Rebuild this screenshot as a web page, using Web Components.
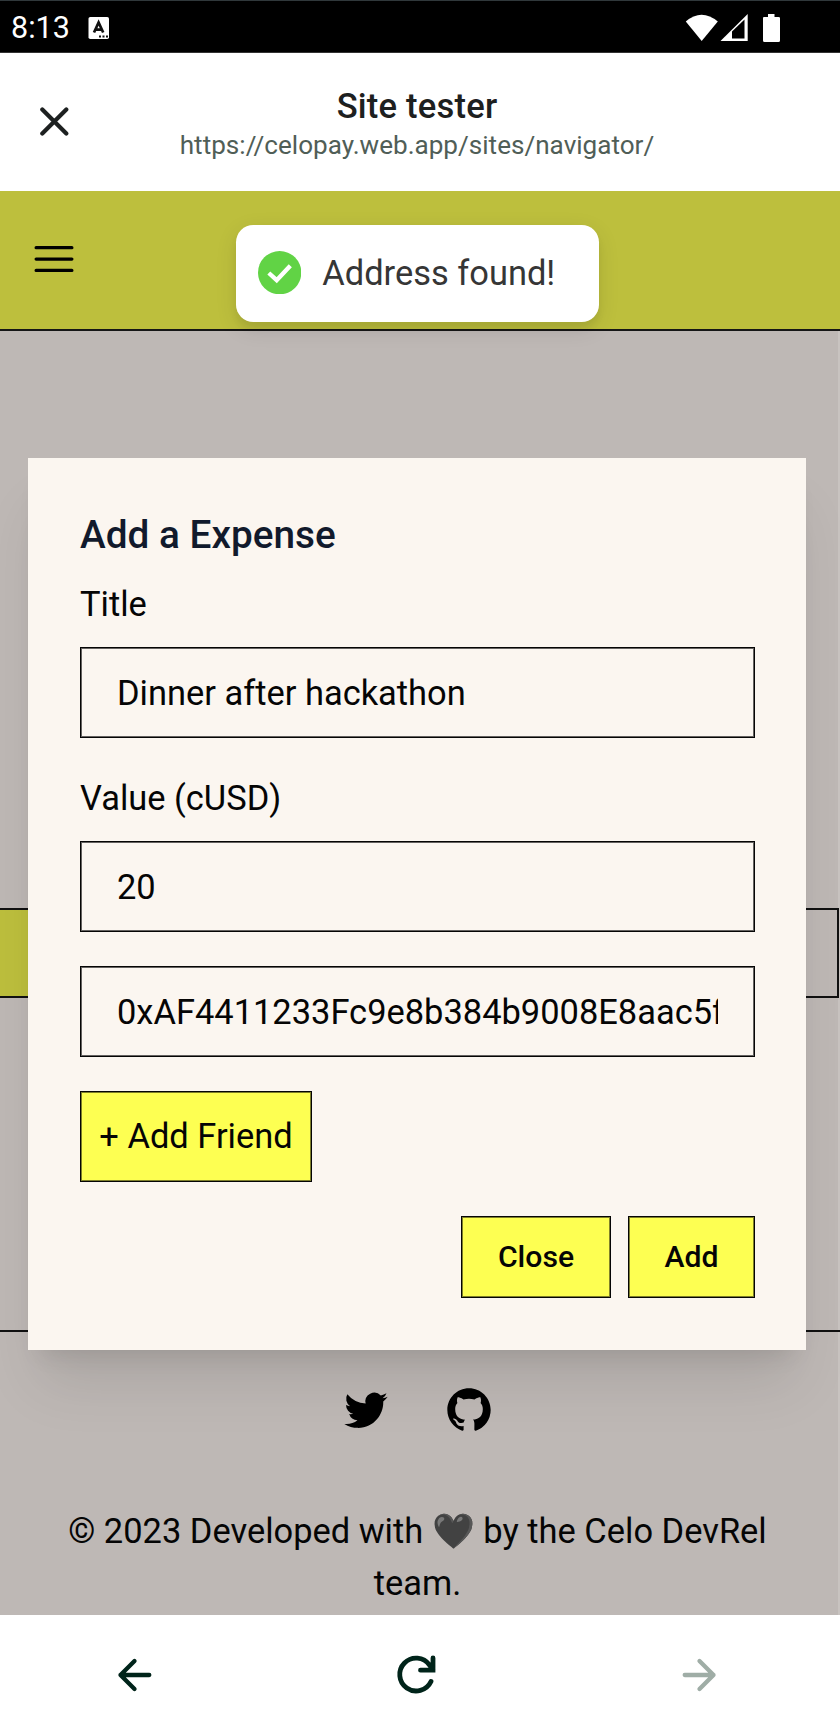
<!DOCTYPE html>
<html lang="en">
<head>
<meta charset="utf-8">
<title>Site tester</title>
<style>
html,body{margin:0;padding:0}
body{width:840px;height:1733px;overflow:hidden;background:#fff;font-family:Roboto,"Noto Sans",sans-serif;color:#050505}
</style>
</head>
<body>
<phone-screen></phone-screen>
<script>
const define = (name, css, html) => {
  const t = document.createElement('template');
  t.innerHTML = `<style>*{box-sizing:border-box}svg{display:block;flex:none}${css}</style>${html}`;
  customElements.define(name, class extends HTMLElement {
    constructor() {
      super();
      this.attachShadow({mode: 'open'}).append(t.content.cloneNode(true));
    }
  });
};

define('status-bar', `
:host{display:flex;align-items:center;height:53px;box-sizing:border-box;background:#000;color:#fff;border-top:1px solid #30383b;border-bottom:1px solid #333;padding:2px 60px 0 11px}
.time{font-size:30.500px;line-height:50px}
.right{margin-left:auto}
`, `<span class="time">8:13</span>
<svg style="margin-left:18px" width="22" height="24" viewBox="0 0 22 24"><rect x=".5" y="1" width="20.5" height="22" rx="1.8" fill="#fff"/><path d="M6 16.500L10.600 6.500L15.200 16.500M7.600 13.600H13.600" fill="none" stroke="#111" stroke-width="2.700"/><path d="M11 20.500h2M14.500 20.500h2M18 20.500h2" stroke="#111" stroke-width="2"/></svg>
<svg class="right" width="96" height="30" viewBox="0 0 96 30"><path d="M1.800 8.500Q17.500-5 33.800 8.500L17.700 28Z" fill="#fff"/><path d="M36.500 28L63.700 1V28Z" fill="#fff"/><path d="M48 18.500L60.500 6.500V25.500H48Z" fill="#000"/><path d="M84 1h6.500v3H94.500q1.500 0 1.500 1V27.500q0 1.500-1.500 1.500H80.500Q79 29 79 27.500V5q0-1 1-1h4Z" fill="#fff"/></svg>`);

define('browser-bar', `
:host{display:grid;grid-template-columns:108px 1fr 114px;align-items:center;height:138px;background:#fff;color:#1d2020}
.mid{display:flex;flex-direction:column;align-items:center;padding-top:3px}
.t{font-size:34.600px;letter-spacing:.2px;font-weight:500;line-height:42px;white-space:nowrap}
.u{font-size:26.100px;line-height:36px;color:#505e57;white-space:nowrap}
svg{margin-left:39px}
`, `<svg width="30" height="30" viewBox="0 0 30 30"><path d="M3.300 2.600L27.300 26.600M27.300 2.600L3.300 26.600" fill="none" stroke="#1d2020" stroke-width="4.200" stroke-linecap="round"/></svg>
<div class="mid"><div class="t"><slot name="title"></slot></div><div class="u"><slot name="url"></slot></div></div>`);

define('site-header', `
:host{display:flex;align-items:center;box-sizing:border-box;height:140px;background:#bdbf3d;border-bottom:2px solid #161616;padding:0 0 2px 28.400px}
`, `<svg width="52" height="52" viewBox="0 0 24 24"><path d="M3.750 6.750h16.500M3.750 12h16.500M3.750 17.250h16.500" fill="none" stroke="#000" stroke-width="1.500" stroke-linecap="round"/></svg>`);

define('site-footer', `
:host{display:flex;flex-direction:column;align-items:center;box-sizing:border-box;height:285px;border-top:2px solid #111;padding:52px 5px 0 0}
.i{display:flex;gap:51px}
p{margin:68.500px 0 0;width:730px;text-align:center;font-size:34.450px;line-height:52px}
`, `<div class="i">
<svg width="52" height="52" viewBox="0 0 24 24"><path d="M8.290 20.251c7.547 0 11.675-6.253 11.675-11.675 0-.178 0-.355-.012-.53A8.348 8.348 0 0022 5.920a8.190 8.190 0 01-2.357.646 4.118 4.118 0 001.804-2.270 8.224 8.224 0 01-2.605.996 4.107 4.107 0 00-6.993 3.743 11.650 11.650 0 01-8.457-4.287 4.106 4.106 0 001.270 5.477A4.072 4.072 0 012.800 9.713v.052a4.105 4.105 0 003.292 4.022 4.095 4.095 0 01-1.853.070 4.108 4.108 0 003.834 2.850A8.233 8.233 0 012 18.407a11.616 11.616 0 006.290 1.840"/></svg>
<svg width="52" height="52" viewBox="0 0 24 24"><path fill-rule="evenodd" d="M12 2C6.477 2 2 6.484 2 12.017c0 4.425 2.865 8.180 6.839 9.504.5.092.682-.217.682-.483 0-.237-.008-.868-.013-1.703-2.782.605-3.369-1.343-3.369-1.343-.454-1.158-1.110-1.466-1.110-1.466-.908-.62.069-.608.069-.608 1.003.070 1.531 1.032 1.531 1.032.892 1.530 2.341 1.088 2.910.832.092-.647.350-1.088.636-1.338-2.220-.253-4.555-1.113-4.555-4.951 0-1.093.390-1.988 1.029-2.688-.103-.253-.446-1.272.098-2.650 0 0 .840-.270 2.750 1.026A9.564 9.564 0 0112 6.844c.850.004 1.705.115 2.504.337 1.909-1.296 2.747-1.027 2.747-1.027.546 1.379.202 2.398.100 2.651.640.700 1.028 1.595 1.028 2.688 0 3.848-2.339 4.695-4.566 4.943.359.309.678.920.678 1.855 0 1.338-.012 2.419-.012 2.747 0 .268.180.580.688.482A10.019 10.019 0 0022 12.017C22 6.484 17.522 2 12 2z"/></svg>
</div><p>© 2023 Developed with 🖤 by the Celo DevRel team.</p>`);

define('nav-bar', `
:host{display:flex;align-items:center;justify-content:space-between;height:118px;background:#fff;box-sizing:border-box;padding:2px 122px 0 115.500px}
`, `<svg width="38" height="38" viewBox="0 0 38 38"><path d="M33.300 19H4.500M18.500 5L4.500 19L18.500 33" fill="none" stroke="#00241a" stroke-width="4.300" stroke-linecap="round" stroke-linejoin="round"/></svg>
<svg width="44" height="44" viewBox="0 0 44 44"><path d="M36 28.500A16.400 16.400 0 1 1 34.500 12L38 16.500M38 5V17.200H25.500" fill="none" stroke="#00241a" stroke-width="4.800" stroke-linecap="round" stroke-linejoin="miter"/></svg>
<svg width="38" height="38" viewBox="0 0 38 38"><path d="M4.700 19H33.500M19.500 5L33.500 19L19.500 33" fill="none" stroke="#9fada6" stroke-width="4.300" stroke-linecap="round" stroke-linejoin="round"/></svg>`);

define('toast-note', `
:host{display:flex;align-items:center;box-sizing:border-box;width:363px;height:96.500px;border-radius:17.300px;background:#fff;color:#363636;padding:0 0 1px 22px;font-size:34.450px;line-height:52px;box-shadow:0 6.500px 21.700px rgba(0,0,0,.1),0 6.500px 6.500px rgba(0,0,0,.05)}
.m{margin-left:21px;white-space:nowrap}
`, `<svg width="43.300" height="43.300" viewBox="0 0 43.300 43.300"><circle cx="21.650" cy="21.650" r="21.650" fill="#61d345"/><path d="M10.800 22L18.700 29.200L32.300 14.800" fill="none" stroke="#fff" stroke-width="4.330"/></svg><span class="m"><slot></slot></span>`);

define('form-field', `
:host{display:block;font-size:34.450px;line-height:52px}
.b{height:91px;border:1px solid #050505;box-shadow:inset 0 0 0 1px rgba(0,0,0,.6);padding:19px 36px}
.v{overflow:hidden;white-space:nowrap;color:#050505}
`, `<div class="b"><div class="v"><slot></slot></div></div>`);

define('flat-button', `
:host{display:inline-flex;align-items:center;justify-content:center;box-sizing:border-box;background:#fdff52;border:1px solid #050505;box-shadow:inset 0 0 0 1px rgba(0,0,0,.5);white-space:nowrap}
`, `<slot></slot>`);

define('expense-dialog', `
:host{display:flex;flex-direction:column;box-sizing:border-box;width:778px;height:892.500px;background:#fbf6f0;padding:51px 51px 0 52px;box-shadow:0 43px 54px -11px rgba(0,0,0,.1),0 17px 22px -13px rgba(0,0,0,.1)}
h2{margin:0 0 17.400px;font-size:38.750px;line-height:52px;font-weight:500;color:#111a2c}
.label{font-size:34.450px;line-height:52px;margin-bottom:17px}
form-field{margin-bottom:34px}
.friend{align-self:flex-start;width:232px;height:91px;font-size:34.450px}
.row{display:flex;justify-content:flex-end;gap:17px;margin-top:34px;font-size:30.150px;font-weight:500}
.row>*{height:82px}
`, `<h2>Add a Expense</h2>
<div class="label">Title</div><form-field>Dinner after hackathon</form-field>
<div class="label">Value (cUSD)</div><form-field>20</form-field>
<form-field>0xAF4411233Fc9e8b384b9008E8aac5f</form-field>
<flat-button class="friend">+ Add Friend</flat-button>
<div class="row"><flat-button style="width:150px">Close</flat-button><flat-button style="width:127px">Add</flat-button></div>`);

define('phone-screen', `
:host{display:grid;grid-template-rows:53px 138px 1fr 118px;width:840px;height:1733px;position:relative}
.page{display:flex;flex-direction:column;background:linear-gradient(#c8c3c0,#c8c3c0) right/2px 100% no-repeat #beb8b5;overflow:hidden}
.space{height:577px;flex:none}
.tabs{display:flex;flex:none;height:90px;border:2px solid #111;border-left:0;margin-right:1px}
.tab{width:420px;background:#bdbf3d}
site-header{flex:none}
site-footer{margin-top:332px;flex:none}
toast-note{position:absolute;left:236px;top:225px}
expense-dialog{position:absolute;left:28px;top:457.500px}
`, `<status-bar></status-bar>
<browser-bar><span slot="title">Site tester</span><span slot="url">https://celopay.web.app/sites/navigator/</span></browser-bar>
<div class="page"><site-header></site-header><div class="space"></div><div class="tabs"><div class="tab"></div></div><site-footer></site-footer></div>
<nav-bar></nav-bar>
<expense-dialog></expense-dialog>
<toast-note>Address found!</toast-note>`);
</script>
</body>
</html>
